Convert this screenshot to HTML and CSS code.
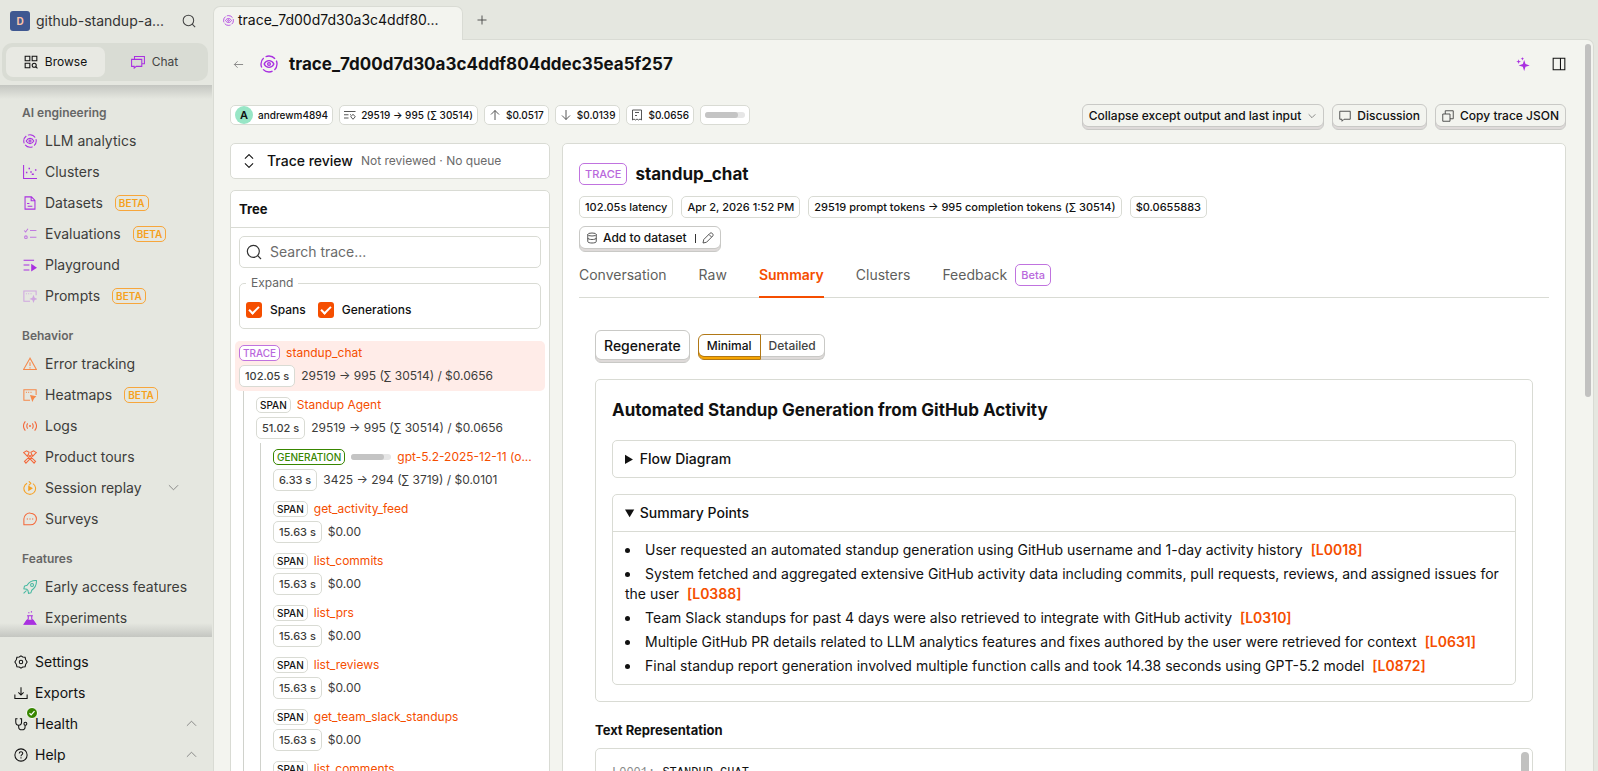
FILE: index.html
```html
<!DOCTYPE html>
<html lang="en">
<head>
    <meta charset="UTF-8">
    <title>trace_7d00d7d30a3c4ddf804ddec35ea5f257</title>
    <link rel="stylesheet" href="styles.css">
</head>
<body>
    <svg class="sprite" aria-hidden="true">
        <symbol id="i-llm" viewBox="0 0 24 24"><circle cx="12" cy="12" r="10.700" stroke-dasharray="13.800 3" stroke-dashoffset="5"/><path d="M5.500 12c1.500-3 4-4.500 6.500-4.500s5 1.500 6.500 4.500c-1.500 3-4 4.500-6.500 4.500S7 15 5.500 12z"/><circle cx="12" cy="12" r="1.800"/></symbol>
        <symbol id="i-search" viewBox="0 0 24 24"><circle cx="11" cy="11" r="9"/><path d="M17.500 17.500L22.500 22.500"/></symbol>
        <symbol id="i-down" viewBox="0 0 24 24"><path d="M2 7l10 10L22 7"/></symbol>
        <symbol id="i-up" viewBox="0 0 24 24"><path d="M2 17L12 7l10 10"/></symbol>
        <symbol id="i-check" viewBox="0 0 24 24"><path d="M6 12.500l4 4 8-9"/></symbol>
    </svg>

    <div class="app">
        <nav class="sidebar">
            <div class="project">
                <span class="project-badge">D</span>
                <a href="#" class="project-name">github-standup-a...</a>
                <button class="icon-btn" aria-label="Search"><svg class="icon"><use href="#i-search"/></svg></button>
            </div>
            <div class="switch">
                <button class="switch-btn active"><svg class="icon" viewBox="0 0 24 24"><path d="M2 2h8v8H2zM14 2h8v8h-8zM2 14h8v8H2z"/><circle cx="17.500" cy="17.500" r="3.500"/><path d="M20 20l3 3"/></svg>Browse</button>
                <button class="switch-btn"><svg class="icon purple" viewBox="0 0 24 24"><path d="M6 7V2.500h17V15h-4M1 7.500h17.500v12H9L5.500 22.500v-3H1z"/></svg>Chat</button>
            </div>
            <div class="nav-scroll">
                <h3>AI engineering</h3>
                <a href="#"><svg class="icon purple"><use href="#i-llm"/></svg>LLM analytics</a>
                <a href="#"><svg class="icon purple" viewBox="0 0 24 24"><path d="M1 0v23h23"/><path d="M5 13h2.500M9.500 6H12M12.500 12H15M15 16h3.500M20.500 8.500H23" stroke-width="2.500"/></svg>Clusters</a>
                <a href="#"><svg class="icon purple" viewBox="0 0 24 24"><path d="M3.500 1.500h11l6 6v15h-17zM14 1.500v6.500h6.500M7 13h4M8 17.500h8"/></svg>Datasets<span class="beta">BETA</span></a>
                <a href="#"><svg class="icon purple faded" viewBox="0 0 24 24"><path d="M2 6l2.500 2.500L8.500 3M12 6h11M12 17.500h11"/><circle cx="5" cy="17.500" r="2.300"/></svg>Evaluations<span class="beta">BETA</span></a>
                <a href="#"><svg class="icon purple" viewBox="0 0 24 24"><path d="M1 4h18M1 12h10M1 20.500h10"/><path class="fill" d="M14 10l10 6.500-10 6.500z"/></svg>Playground</a>
                <a href="#"><svg class="icon purple pale" viewBox="0 0 24 24"><path d="M12 21H1.500V3.500h21v7M5 8h1.500M9 8h1.500M13 8h1.500"/><path class="fill" d="M18 10l2 5 5 2-5 2-2 5-2-5-5-2 5-2z"/></svg>Prompts<span class="beta">BETA</span></a>
                <h3>Behavior</h3>
                <a href="#"><svg class="icon orange" viewBox="0 0 24 24"><path d="M12 2L1 21.500h22zM12 9v6.500M12 17.500v2"/></svg>Error tracking</a>
                <a href="#"><svg class="icon orange" viewBox="0 0 24 24"><path d="M12 21H1.500V3h21v9M5 7.500h1.500M9 7.500h1.500M13 7.500h1.500"/><path class="fill" d="M12 12l11 2-4 4-3 6z"/></svg>Heatmaps<span class="beta">BETA</span></a>
                <a href="#"><svg class="icon red" viewBox="0 0 24 24"><path d="M4 4c-4 5-4 11 0 16M20 4c4 5 4 11 0 16M8 7.500c-2 3-2 6 0 9M16 7.500c2 3 2 6 0 9"/><circle class="fill" cx="12" cy="12" r="1.700"/></svg>Logs</a>
                <a href="#"><svg class="icon red" viewBox="0 0 24 24"><path d="M2.500 19.500L15 8l2 2L5 22.500zM21.500 19.500L9 8l-2 2L19 22.500zM5.500 22.500l-3-3M1 4.500L6 1.500l4.500 2.500L9 8 6.500 10 4 7zM23 4.500l-5-3L13.500 4 15 8l2.500 2L20 7z"/></svg>Product tours</a>
                <a href="#"><svg class="icon amber" viewBox="0 0 24 24"><path d="M17 4.500A10 10 0 1 1 7 4M10 .500L13.500 4 10 7.500"/><path class="fill" d="M9 7.500l8 5-8 5z"/></svg>Session replay<svg class="icon chev"><use href="#i-down"/></svg></a>
                <a href="#"><svg class="icon red" viewBox="0 0 24 24"><path d="M13 2a9.800 9.800 0 0 1 0 20H1.500V12A10 10 0 0 1 13 2zM6.500 12h2M11 12h2M15.500 12h2"/></svg>Surveys</a>
                <h3>Features</h3>
                <a href="#"><svg class="icon teal" viewBox="0 0 24 24"><path d="M23 1c-7-.5-12 2-16 8L2.500 10.500 1.500 15l5 1 2 2 1 5 4-1 1.500-4.500C20.500 13.500 23.500 8 23 1zM1 23l5-5"/><circle cx="15.500" cy="8.500" r="2.500"/></svg>Early access features</a>
                <a href="#"><svg class="icon purple" viewBox="0 0 24 24"><path d="M7 8h10M9 8v6l-7 8.500h20L15 14V8M9 3h2M13.500 1.500h2"/><path class="fill" d="M6 15h12l5 8H1z"/></svg>Experiments</a>
            </div>
            <div class="nav-bottom">
                <a href="#"><svg class="icon" viewBox="0 0 24 24"><path d="M12 1.500l3 2 4 .500 1 4 2.500 4-2.500 4-1 4-4 .500-3 2-3-2-4-.500-1-4-2.500-4 2.500-4 1-4 4-.500z"/><circle cx="12" cy="12" r="3"/></svg>Settings</a>
                <a href="#"><svg class="icon" viewBox="0 0 24 24"><path d="M12 2v13M7.500 11l4.500 4.500 4.500-4.500M1.500 14.500v7h21v-7"/></svg>Exports</a>
                <a href="#"><span class="health"><svg class="icon" viewBox="0 0 24 24"><path d="M6 3H3v5c0 4 2 6 5 6s5-2 5-6V3h-3M8 14v3c0 3 2 5 5.500 5s5.500-2 5.500-5v-3"/><circle cx="19.500" cy="11.500" r="2.500"/></svg><span class="health-ok"><svg class="icon"><use href="#i-check"/></svg></span></span>Health<svg class="icon chev"><use href="#i-up"/></svg></a>
                <a href="#"><svg class="icon" viewBox="0 0 24 24"><circle cx="12" cy="12" r="10.500"/><path d="M9 9.500c0-4 6-4 6-.500 0 2.500-3 2-3 5M12 16v2"/></svg>Help<svg class="icon chev"><use href="#i-up"/></svg></a>
            </div>
        </nav>

        <div class="window">
            <div class="tabbar">
                <a href="#" class="tab"><svg class="icon purple"><use href="#i-llm"/></svg>trace_7d00d7d30a3c4ddf80...</a>
                <button class="icon-btn new-tab" aria-label="New tab"><svg class="icon" viewBox="0 0 24 24"><path d="M12 3v18M3 12h18"/></svg></button>
            </div>
            <main class="scene">
                <header class="title-row">
                    <button class="icon-btn back" aria-label="Back"><svg class="icon" viewBox="0 0 24 24"><path d="M22 12H3M10 5l-7 7 7 7"/></svg></button>
                    <svg class="icon purple title-icon"><use href="#i-llm"/></svg>
                    <h1>trace_7d00d7d30a3c4ddf804ddec35ea5f257</h1>
                    <button class="icon-btn" aria-label="AI"><svg class="icon purple spark" viewBox="0 0 24 24"><path class="fill" d="M14 5l2.300 7.200L23.500 14.500l-7.200 2.300L14 24l-2.300-7.200-7.200-2.300 7.200-2.300zM4.500 4l1 2.700L8.500 8l-3 1.200-1 2.800-1-2.800L.5 8l3-1.300zM11 0l.8 2.200 2.200.8-2.200.8L11 6l-.8-2.200L8 3l2.200-.8z"/></svg></button>
                    <button class="icon-btn" aria-label="Panel"><svg class="icon panel-icon" viewBox="0 0 24 24"><path d="M2 2h20v20H2zM14.500 2v20"/></svg></button>
                </header>

                <div class="meta-row">
                    <span class="chip user"><span class="avatar">A</span>andrewm4894</span>
                    <span class="chip"><svg class="icon" viewBox="0 0 24 24"><path d="M0 5h23M0 11.500h9M0 18h9M12 11.500h2M18 10.500l4.500 5-4.500 5-4.500-5z"/></svg>29519 → 995 (∑ 30514)</span>
                    <span class="chip"><svg class="icon" viewBox="0 0 24 24"><path d="M12 22V3M4 11l8-8 8 8"/></svg>$0.0517</span>
                    <span class="chip"><svg class="icon" viewBox="0 0 24 24"><path d="M12 2v19M4 13l8 8 8-8"/></svg>$0.0139</span>
                    <span class="chip"><svg class="icon" viewBox="0 0 24 24"><path d="M3 2h18v20l-3-2-3 2-3-2-3 2-3-2-3 2zM8 7h8M8 13h4"/></svg>$0.0656</span>
                    <span class="chip"><span class="meter"><span class="meter-fill"></span></span></span>
                    <div class="actions">
                        <button class="btn">Collapse except output and last input<svg class="icon small"><use href="#i-down"/></svg></button>
                        <button class="btn"><svg class="icon" viewBox="0 0 24 24"><path d="M1.500 2.500h21v16H10l-4 4v-4H1.500z"/></svg>Discussion</button>
                        <button class="btn"><svg class="icon" viewBox="0 0 24 24"><path d="M1.500 8h14.500v14.500H1.500zM6.500 8V1.500h16v16H16"/></svg>Copy trace JSON</button>
                    </div>
                </div>

                <div class="columns">
                    <div class="left">
                        <section class="card review">
                            <svg class="icon" viewBox="0 0 24 24"><path d="M5 8l7-7 7 7M5 16l7 7 7-7"/></svg>
                            <h2>Trace review</h2>
                            <span>Not reviewed · No queue</span>
                        </section>
                        <section class="card tree">
                            <h2>Tree</h2>
                            <label class="search">
                                <svg class="icon"><use href="#i-search"/></svg>
                                <input type="text" placeholder="Search trace..." aria-label="Search trace">
                            </label>
                            <fieldset>
                                <legend>Expand</legend>
                                <label><input type="checkbox" checked>Spans</label>
                                <label><input type="checkbox" checked>Generations</label>
                            </fieldset>
                            <ul class="nodes">
                                <li>
                                    <div class="node selected">
                                        <div class="node-head"><span class="tag trace">TRACE</span><a href="#">standup_chat</a></div>
                                        <div class="node-info"><span class="time">102.05 s</span>29519 → 995 (∑ 30514) / $0.0656</div>
                                    </div>
                                    <ul>
                                        <li>
                                            <div class="node">
                                                <div class="node-head"><span class="tag">SPAN</span><a href="#">Standup Agent</a></div>
                                                <div class="node-info"><span class="time">51.02 s</span>29519 → 995 (∑ 30514) / $0.0656</div>
                                            </div>
                                            <ul>
                                                <li class="node">
                                                    <div class="node-head"><span class="tag generation">GENERATION</span><span class="meter"><span class="meter-fill"></span></span><a href="#">gpt-5.2-2025-12-11 (o...</a></div>
                                                    <div class="node-info"><span class="time">6.33 s</span>3425 → 294 (∑ 3719) / $0.0101</div>
                                                </li>
                                                <li class="node">
                                                    <div class="node-head"><span class="tag">SPAN</span><a href="#">get_activity_feed</a></div>
                                                    <div class="node-info"><span class="time">15.63 s</span>$0.00</div>
                                                </li>
                                                <li class="node">
                                                    <div class="node-head"><span class="tag">SPAN</span><a href="#">list_commits</a></div>
                                                    <div class="node-info"><span class="time">15.63 s</span>$0.00</div>
                                                </li>
                                                <li class="node">
                                                    <div class="node-head"><span class="tag">SPAN</span><a href="#">list_prs</a></div>
                                                    <div class="node-info"><span class="time">15.63 s</span>$0.00</div>
                                                </li>
                                                <li class="node">
                                                    <div class="node-head"><span class="tag">SPAN</span><a href="#">list_reviews</a></div>
                                                    <div class="node-info"><span class="time">15.63 s</span>$0.00</div>
                                                </li>
                                                <li class="node">
                                                    <div class="node-head"><span class="tag">SPAN</span><a href="#">get_team_slack_standups</a></div>
                                                    <div class="node-info"><span class="time">15.63 s</span>$0.00</div>
                                                </li>
                                                <li class="node">
                                                    <div class="node-head"><span class="tag">SPAN</span><a href="#">list_comments</a></div>
                                                </li>
                                            </ul>
                                        </li>
                                    </ul>
                                </li>
                            </ul>
                        </section>
                    </div>

                    <section class="card detail">
                        <div class="detail-title"><span class="tag large trace">TRACE</span><h2>standup_chat</h2></div>
                        <div class="facts">
                            <span class="fact">102.05s latency</span>
                            <span class="fact">Apr 2, 2026 1:52 PM</span>
                            <span class="fact">29519 prompt tokens → 995 completion tokens (∑ 30514)</span>
                            <span class="fact">$0.0655883</span>
                        </div>
                        <button class="btn dataset"><svg class="icon" viewBox="0 0 24 24"><ellipse cx="12" cy="5" rx="8.500" ry="3"/><path d="M3.500 5v14c0 4 17 4 17 0V5M3.500 12c0 4 17 4 17 0"/></svg>Add to dataset<span class="divider"></span><svg class="icon" viewBox="0 0 24 24"><path d="M2 22l1.500-7L16 2.500c3-2.500 8 2 5.500 5.500L9 20.500zM14 5l5 5"/></svg></button>
                        <div class="tabs">
                            <a href="#">Conversation</a>
                            <a href="#">Raw</a>
                            <a href="#" class="active">Summary</a>
                            <a href="#">Clusters</a>
                            <a href="#">Feedback<span class="tag large trace">Beta</span></a>
                        </div>
                        <div class="summary">
                            <div class="modes">
                                <button class="btn big">Regenerate</button>
                                <div class="segmented">
                                    <button class="btn on">Minimal</button>
                                    <button class="btn">Detailed</button>
                                </div>
                            </div>
                            <div class="box result">
                                <h2>Automated Standup Generation from GitHub Activity</h2>
                                <details class="box"><summary>Flow Diagram</summary></details>
                                <details class="box" open>
                                    <summary>Summary Points</summary>
                                    <ul>
                                        <li>User requested an automated standup generation using GitHub username and 1-day activity history <a href="#">[L0018]</a></li>
                                        <li>System fetched and aggregated extensive GitHub activity data including commits, pull requests, reviews, and assigned issues for the user <a href="#">[L0388]</a></li>
                                        <li>Team Slack standups for past 4 days were also retrieved to integrate with GitHub activity <a href="#">[L0310]</a></li>
                                        <li>Multiple GitHub PR details related to LLM analytics features and fixes authored by the user were retrieved for context <a href="#">[L0631]</a></li>
                                        <li>Final standup report generation involved multiple function calls and took 14.38 seconds using GPT-5.2 model <a href="#">[L0872]</a></li>
                                    </ul>
                                </details>
                            </div>
                            <h4>Text Representation</h4>
                            <div class="box text-rep"><pre><span>L0001:</span> STANDUP_CHAT</pre><div class="thumb"></div></div>
                        </div>
                    </section>
                </div>
                <div class="page-thumb"></div>
            </main>
        </div>
    </div>
</body>
</html>
```

FILE: styles.css
```css
* {
    box-sizing: border-box;
}
body {
    margin: 0;
    font-family: Inter, "Noto Sans", sans-serif;
    font-size: 14px;
    line-height: 20px;
    color: #111;
    background: #e5e7e0;
}
h1, h2, h3, h4, ul, pre, fieldset {
    margin: 0;
    padding: 0;
}
ul {
    list-style: none;
}
a {
    color: inherit;
    text-decoration: none;
}
button {
    font: inherit;
    color: inherit;
    background: none;
    border: 0;
    padding: 0;
    cursor: pointer;
}
.sprite {
    display: none;
}
.icon {
    width: 14px;
    height: 14px;
    flex: none;
    fill: none;
    stroke: currentColor;
    stroke-width: 1.8;
}
.icon .fill {
    fill: currentColor;
    stroke: none;
}
.icon-btn {
    display: flex;
    align-items: center;
    justify-content: center;
    color: #444;
}
.purple { color: #a931e0; }
.orange { color: #f5894a; }
.amber { color: #f7a021; }
.red { color: #f4683a; }
.teal { color: #45b8a0; }
.faded { opacity: .6; }
.pale { opacity: .35; }

.app {
    display: flex;
    height: 100vh;
    overflow: hidden;
}

/* sidebar */
.sidebar {
    width: 212px;
    flex: none;
    display: flex;
    flex-direction: column;
}
.project {
    display: flex;
    align-items: center;
    gap: 6px;
    height: 42px;
    padding: 0 16px 0 10px;
}
.project-badge {
    width: 20px;
    height: 20px;
    border-radius: 3px;
    background: #3f5891;
    color: #fcc3a8;
    font-size: 10px;
    font-weight: 700;
    text-align: center;
}
.project-name {
    flex: 1;
    color: #333;
}
.switch {
    display: flex;
    margin: 1px 4px 4px 2px;
    padding: 4px;
    border-radius: 10px;
    background: #d9dcd4;
}
.switch-btn {
    flex: 1;
    display: flex;
    align-items: center;
    justify-content: center;
    gap: 7px;
    height: 30px;
    border-radius: 7px;
    font-size: 12px;
    color: #444;
}
.switch-btn.active {
    background: #e8e9e3;
    color: #111;
}
.nav-scroll {
    flex: 1;
    min-height: 0;
    overflow: hidden;
    padding-top: 13px;
    background:
        linear-gradient(#c4c6c1, #e5e7e000) top / 100% 14px no-repeat,
        linear-gradient(#e5e7e000, #c4c6c1) bottom / 100% 14px no-repeat;
}
.nav-scroll h3 {
    padding: 5px 22px 2px;
    font-size: 12px;
    font-weight: 600;
    line-height: 20px;
    color: #666;
}
.nav-scroll a + h3 {
    margin-top: 10px;
}
.nav-scroll a, .nav-bottom a {
    display: flex;
    align-items: center;
    gap: 8px;
    height: 31px;
    padding: 0 28px 0 23px;
    color: #3d3d3b;
    white-space: nowrap;
}
.nav-scroll .chev {
    margin-right: 5px;
}
.nav-bottom {
    padding: 9px 0 0;
    height: 134px;
}
.nav-bottom a {
    padding: 0 15px 0 14px;
    gap: 7px;
    color: #111;
}
.chev {
    width: 11px;
    height: 11px;
    margin-left: auto;
    color: #777;
}
.beta {
    margin-left: 4px;
    padding: 0 3px;
    border: 1px solid #f7a63b;
    border-radius: 5px;
    color: #f5a11c;
    font-size: 10px;
    font-weight: 600;
    line-height: 14px;
}
.health {
    position: relative;
    display: flex;
}
.health-ok {
    position: absolute;
    top: -10px;
    left: 12px;
    display: flex;
    border: 1px solid #fff;
    border-radius: 50%;
    background: #388600;
    color: #fff;
}
.health-ok .icon {
    width: 10px;
    height: 10px;
    stroke-width: 3;
}

/* scene */
.window {
    flex: 1;
    min-width: 0;
    display: flex;
    flex-direction: column;
    padding: 6px 4px 0 1px;
}
.tabbar {
    display: flex;
    align-items: center;
    height: 33px;
}
.tab {
    display: flex;
    align-items: center;
    gap: 4px;
    height: 34px;
    width: 250px;
    padding: 0 9px 6px;
    border: 1px solid #d9dbd4;
    border-bottom: 0;
    border-radius: 7px 7px 0 0;
    background: #f3f4ef;
    z-index: 1;
}
.tab .icon {
    width: 11px;
    height: 11px;
}
.new-tab {
    margin-left: 13px;
    padding-bottom: 6px;
}
.new-tab .icon {
    width: 12px;
    height: 12px;
}
.scene {
    position: relative;
    flex: 1;
    min-height: 0;
    overflow: hidden;
    padding: 4px 27px 0 16px;
    border: 1px solid #d9dbd4;
    border-bottom: 0;
    border-top-right-radius: 7px;
    background: #f3f4ef;
}
.page-thumb {
    position: absolute;
    top: 4px;
    right: 2px;
    width: 6px;
    height: 353px;
    border-radius: 3px;
    background: #c1c1c0;
}
.title-row {
    display: flex;
    align-items: center;
    height: 40px;
}
.back {
    width: 16px;
    color: #777;
}
.back .icon {
    width: 11px;
    height: 11px;
}
.title-icon {
    width: 18px;
    height: 18px;
    margin: 0 11px 0 14px;
}
h1 {
    flex: 1;
    font-size: 17px;
    font-weight: 700;
    line-height: 24px;
}
.title-row .icon-btn + .icon-btn {
    margin: 0 0 0 22px;
}
.title-row .panel-icon {
    color: #111;
}
.meta-row {
    display: flex;
    align-items: center;
    gap: 6px;
    margin-top: 18px;
    height: 26px;
}
.chip {
    display: flex;
    align-items: center;
    gap: 5px;
    height: 20px;
    padding: 0 4px;
    border: 1px solid #d9dbd4;
    border-radius: 5px;
    background: #fff;
    font-size: 10px;
    font-weight: 500;
    white-space: nowrap;
}
.chip .icon {
    width: 12px;
    height: 12px;
    color: #444;
}
.avatar {
    width: 18px;
    height: 18px;
    border-radius: 50%;
    background: #98e6c6;
    font-size: 11px;
    font-weight: 600;
    line-height: 18px;
    text-align: center;
}
.meter {
    flex: none;
    width: 40px;
    height: 6px;
    border-radius: 3px;
    background: #e6e6e6;
}
.meter-fill {
    display: block;
    width: 83%;
    height: 6px;
    border-radius: 3px;
    background: #c4c4c4;
}
.actions {
    display: flex;
    gap: 8px;
    margin-left: auto;
    padding-top: 4px;
}
.btn {
    display: flex;
    align-items: center;
    gap: 6px;
    height: 26px;
    padding: 0 6px 2px;
    border: 1px solid #c9c9c6;
    border-radius: 6px;
    box-shadow: inset 0 -2px #dedad9, inset 0 -3px #c9c9c6;
    font-size: 12px;
    font-weight: 500;
    line-height: 18px;
    white-space: nowrap;
}
.btn .icon {
    width: 12px;
    height: 12px;
    color: #444;
}
.btn .small {
    width: 8px;
    height: 8px;
    margin: 0 1px;
}
.columns {
    display: flex;
    gap: 12px;
    margin-top: 15px;
}
.left {
    width: 320px;
    flex: none;
}
.card {
    border: 1px solid #d9dbd4;
    border-radius: 5px;
    background: #fff;
}
.review {
    display: flex;
    align-items: center;
    height: 36px;
    padding: 0 11px;
    margin-bottom: 11px;
}
.review h2 {
    margin: 0 8px 0 11px;
    font-size: 14px;
    font-weight: 500;
}
.review span {
    font-size: 12px;
    color: #6b6b6b;
}
.tree h2 {
    height: 37px;
    padding: 8px;
    border-bottom: 1px solid #d9dbd4;
    font-size: 13px;
    font-weight: 700;
}
.search {
    display: flex;
    align-items: center;
    gap: 8px;
    height: 32px;
    margin: 8px 8px 5px;
    padding: 0 6px;
    border: 1px solid #d9dbd4;
    border-radius: 5px;
}
.search .icon {
    width: 16px;
    height: 16px;
    color: #333;
}
.search input {
    flex: 1;
    min-width: 0;
    border: 0;
    padding: 0;
    outline: 0;
    font: inherit;
}
.search input::placeholder {
    color: #6b6b6b;
    opacity: 1;
}
fieldset {
    display: flex;
    gap: 12px;
    height: 56px;
    margin: 0 8px;
    padding: 7px 6px 0;
    border: 1px solid #d9dbd4;
    border-radius: 5px;
}
legend {
    margin-left: 0;
    padding: 0 5px;
    font-size: 12px;
    line-height: 20px;
    color: #666;
}
fieldset label {
    display: flex;
    align-items: center;
    gap: 8px;
    height: 20px;
    font-size: 12px;
    font-weight: 500;
}
fieldset input {
    appearance: none;
    width: 16px;
    height: 16px;
    margin: 0;
    border-radius: 3px;
    background: #f54e00;
    display: grid;
    place-items: center;
}
fieldset input::before {
    content: "";
    width: 8px;
    height: 4px;
    margin-bottom: 2px;
    border: solid #fff;
    border-width: 0 0 2px 2px;
    transform: rotate(-45deg);
}
.nodes {
    padding: 12px 4px 0;
}
.nodes ul {
    margin-left: 8px;
    padding-left: 8px;
    border-left: 1px solid #d0d2cc;
    padding-top: 2px;
}
.node {
    height: 50px;
    margin-bottom: 2px;
    padding: 2px 4px;
    border-radius: 5px;
    font-size: 12px;
}
.nodes div.node {
    margin-bottom: 0;
}
.selected {
    background: #ffece8;
}
.node-head, .node-info {
    display: flex;
    align-items: center;
    gap: 6px;
    height: 20px;
    white-space: nowrap;
}
.node-info {
    height: 26px;
    color: #3d3d3b;
}
.node-head a {
    color: #f54e00;
}
.tag {
    flex: none;
    padding: 0 3px;
    border: 1px solid #d9dbd4;
    border-radius: 5px;
    font-size: 10px;
    font-weight: 500;
    line-height: 14px;
    background: #fff;
}
.tag.trace {
    border-color: #c073df;
    color: #b968dc;
}
.tag.generation {
    border-color: #388600;
    color: #388600;
}
.tag.large {
    padding: 0 5px;
    font-size: 11px;
    line-height: 20px;
}
.time, .fact {
    padding: 0 5px;
    border: 1px solid #d9dbd4;
    border-radius: 5px;
    background: #fff;
    font-size: 11px;
    font-weight: 500;
    line-height: 20px;
}

/* detail panel */
.detail {
    flex: 1;
    min-width: 0;
    padding: 18px 16px 0;
}
.detail-title, .facts, .modes {
    display: flex;
    align-items: center;
    gap: 8px;
}
.detail-title h2 {
    font-size: 17px;
    font-weight: 700;
    line-height: 24px;
}
.facts {
    margin: 10px 0 8px;
}
.dataset {
    gap: 5px;
}
.divider {
    width: 1px;
    height: 9px;
    margin: 0 1px 0 3px;
    background: #333;
}
.tabs {
    display: flex;
    gap: 32px;
    height: 46px;
    border-bottom: 1px solid #d9dbd4;
    color: #5f5f5d;
}
.tabs a {
    display: flex;
    align-items: center;
    gap: 8px;
    height: 46px;
}
.tabs .active {
    color: #f54e00;
    font-weight: 600;
    border-bottom: 2px solid #f54e00;
    padding-top: 2px;
}
.summary {
    padding: 32px 16px 0;
}
.modes .big {
    height: 33px;
    padding: 0 8px 2px;
    font-size: 14px;
}
.segmented {
    display: flex;
}
.segmented .btn {
    padding: 0 8px 2px;
    font-size: 12px;
    border-left: 0;
    border-radius: 0 6px 6px 0;
    color: #444;
}
.segmented .on {
    border: 1px solid #b17816;
    border-radius: 6px 0 0 6px;
    box-shadow: inset 0 -2px #f7a501, inset 0 -3px #b17816;
    color: #111;
}
.box {
    border: 1px solid #d9dbd4;
    border-radius: 5px;
}
.result {
    margin: 16px 0;
    padding: 16px;
}
.result h2 {
    margin-bottom: 16px;
    font-size: 17px;
    font-weight: 700;
    line-height: 28px;
}
.result details + details {
    margin-top: 16px;
}
summary {
    padding: 8px 12px;
    font-weight: 500;
}
details[open] summary {
    border-bottom: 1px solid #d9dbd4;
}
details ul {
    padding: 8px 12px;
    list-style: disc inside;
}
details li + li {
    margin-top: 4px;
}
details li a {
    margin-left: 4px;
    color: #f54e00;
    font-weight: 600;
}
h4 {
    font-size: 13px;
    font-weight: 700;
    line-height: 24px;
    margin-bottom: 6px;
}
.text-rep {
    display: flex;
    justify-content: space-between;
    padding: 3px;
    height: 300px;
}
pre {
    padding: 13px;
    font: 12px/16px "Liberation Mono", monospace;
}
pre span {
    color: #888;
}
.thumb {
    width: 8px;
    height: 60px;
    border-radius: 4px;
    background: #c1c1c0;
}
```
